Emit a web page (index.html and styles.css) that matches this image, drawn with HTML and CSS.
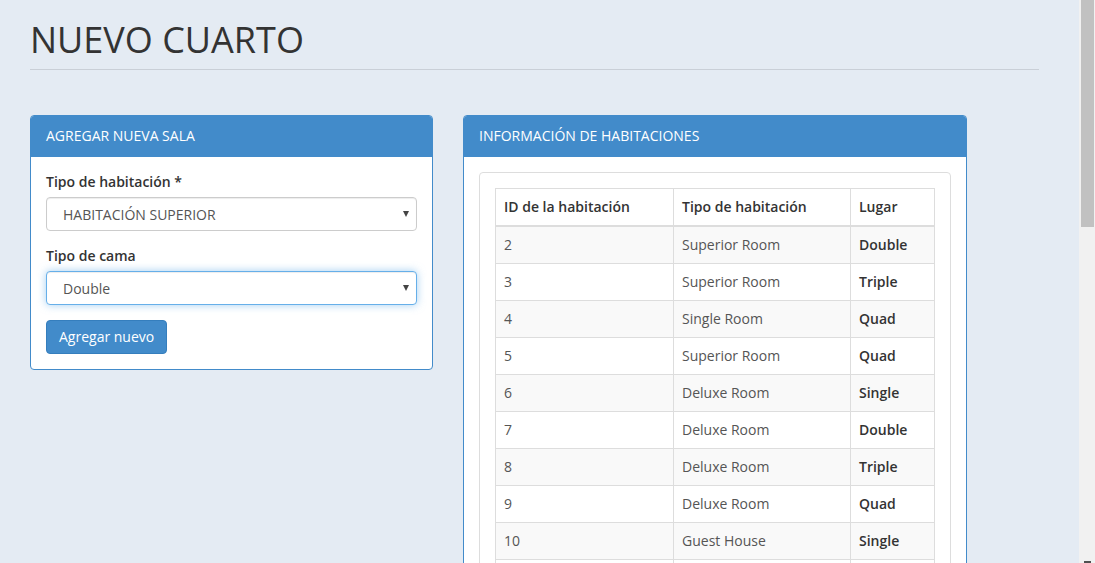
FILE: index.html
```html
<!DOCTYPE html>
<html lang="es">
<head>
<meta charset="utf-8">
<title>Nuevo cuarto</title>
<link rel="stylesheet" href="styles.css">
</head>
<body>
<div class="shell">
  <main class="main">
    <header class="page-header">
      <h1 class="page-title">NUEVO CUARTO</h1>
    </header>
    <div class="row">
      <section class="panel panel-form">
        <div class="panel-heading">AGREGAR NUEVA SALA</div>
        <div class="panel-body">
          <div class="form-group">
            <label class="form-label">Tipo de habitación *</label>
            <div class="select-wrap">
              <select class="form-control">
                <option>HABITACIÓN SUPERIOR</option>
              </select>
              <span class="caret"></span>
            </div>
          </div>
          <div class="form-group">
            <label class="form-label">Tipo de cama</label>
            <div class="select-wrap">
              <select class="form-control is-focused">
                <option>Double</option>
              </select>
              <span class="caret"></span>
            </div>
          </div>
          <button class="btn" type="button">Agregar nuevo</button>
        </div>
      </section>
      <section class="panel panel-table">
        <div class="panel-heading">INFORMACIÓN DE HABITACIONES</div>
        <div class="panel-body">
          <div class="well">
            <table class="table">
              <colgroup>
                <col class="c1"><col class="c2"><col class="c3">
              </colgroup>
              <thead>
                <tr><th>ID de la habitación</th><th>Tipo de habitación</th><th>Lugar</th></tr>
              </thead>
              <tbody>
                <tr><td>2</td><td>Superior Room</td><td class="b">Double</td></tr>
                <tr><td>3</td><td>Superior Room</td><td class="b">Triple</td></tr>
                <tr><td>4</td><td>Single Room</td><td class="b">Quad</td></tr>
                <tr><td>5</td><td>Superior Room</td><td class="b">Quad</td></tr>
                <tr><td>6</td><td>Deluxe Room</td><td class="b">Single</td></tr>
                <tr><td>7</td><td>Deluxe Room</td><td class="b">Double</td></tr>
                <tr><td>8</td><td>Deluxe Room</td><td class="b">Triple</td></tr>
                <tr><td>9</td><td>Deluxe Room</td><td class="b">Quad</td></tr>
                <tr><td>10</td><td>Guest House</td><td class="b">Single</td></tr>
                <tr class="row-empty"><td></td><td></td><td></td></tr>
              </tbody>
            </table>
          </div>
        </div>
      </section>
    </div>
  </main>
  <div class="scrollbar"><div class="thumb"></div><div class="track-end"><span class="arrow-down"></span></div></div>
</div>
</body>
</html>
```

FILE: styles.css
```css
html, body {
  margin: 0;
  padding: 0;
  height: 563px;
  overflow: hidden;
}
body {
  background: #e4ebf3;
  font-family: "Open Sans", "Noto Sans", sans-serif;
  font-size: 14px;
  line-height: 20px;
  color: #333;
}
.shell {
  display: flex;
  height: 563px;
}
.main {
  flex: 1;
  padding: 0 40px 0 30px;
  min-width: 0;
}
.page-header {
  margin-top: 20px;
  padding-bottom: 9px;
  border-bottom: 1px solid #c9cfd7;
}
.page-title {
  margin: 0;
  font-size: 36px;
  line-height: 40px;
  font-weight: 400;
  color: #333;
  letter-spacing: 0;
}
.row {
  display: flex;
  align-items: flex-start;
  gap: 30px;
  margin-top: 45px;
}
.panel {
  background: #fff;
  border: 1px solid #428bca;
  border-radius: 4px;
  overflow: hidden;
}
.panel-form { width: 403px; box-sizing: border-box; }
.panel-table { width: 504px; box-sizing: border-box; }
.panel-heading {
  background: #428bca;
  color: #fff;
  padding: 0 15px 2px;
  height: 39px;
  line-height: 39px;
  font-size: 14px;
}
.panel-body {
  padding: 15px;
}
.form-group {
  margin-bottom: 15px;
}
.form-label {
  display: block;
  margin-bottom: 5px;
  font-weight: 600;
  color: #333;
}
.select-wrap {
  position: relative;
}
.form-control {
  display: block;
  width: 100%;
  height: 34px;
  box-sizing: border-box;
  padding: 0 16px;
  font-family: inherit;
  font-size: 14px;
  color: #555;
  background: #fff;
  border: 1px solid #ccc;
  border-radius: 4px;
  box-shadow: inset 0 1px 1px rgba(0,0,0,.075);
  -webkit-appearance: none;
  appearance: none;
  outline: none;
}
.form-control.is-focused {
  border-color: #66afe9;
  box-shadow: inset 0 1px 1px rgba(0,0,0,.075), 0 0 8px rgba(102,175,233,.6);
}
.caret {
  position: absolute;
  right: 8px;
  top: 14px;
  width: 0;
  height: 0;
  border-left: 3.5px solid transparent;
  border-right: 3.5px solid transparent;
  border-top: 6px solid #444;
  pointer-events: none;
}
.btn {
  display: inline-block;
  height: 34px;
  padding: 0 12px 2px;
  font-family: inherit;
  font-size: 14px;
  color: #fff;
  background: #428bca;
  border: 1px solid #357ebd;
  border-radius: 4px;
}
.well {
  border: 1px solid #ddd;
  border-radius: 4px;
  padding: 15px;
  background: #fff;
}
.table {
  width: 100%;
  border-collapse: collapse;
  border: 1px solid #ddd;
  table-layout: fixed;
}
.c1 { width: 178px; }
.c2 { width: 177px; }
.c3 { width: auto; }
.table th, .table td {
  padding: 8px;
  text-align: left;
  border: 1px solid #ddd;
  line-height: 20px;
  white-space: nowrap;
}
.table th {
  font-weight: 600;
  color: #333;
  border-bottom: 2px solid #ddd;
}
.table td { color: #555; }
.table td.b { font-weight: 600; color: #333; }
.table tbody tr:nth-child(odd) { background: #f9f9f9; }
.table .row-empty td { height: 20px; }
.scrollbar {
  width: 16px;
  flex: none;
  background: #f1f1f1;
  display: flex;
  flex-direction: column;
  justify-content: space-between;
}
.thumb {
  margin: 0 1px 0 2px;
  height: 227px;
  background: #c1c1c1;
}
.track-end {
  display: flex;
  justify-content: center;
  height: 3px;
}
.arrow-down {
  width: 7px;
  height: 2px;
  background: #505050;
  margin-top: 1px;
}
```
